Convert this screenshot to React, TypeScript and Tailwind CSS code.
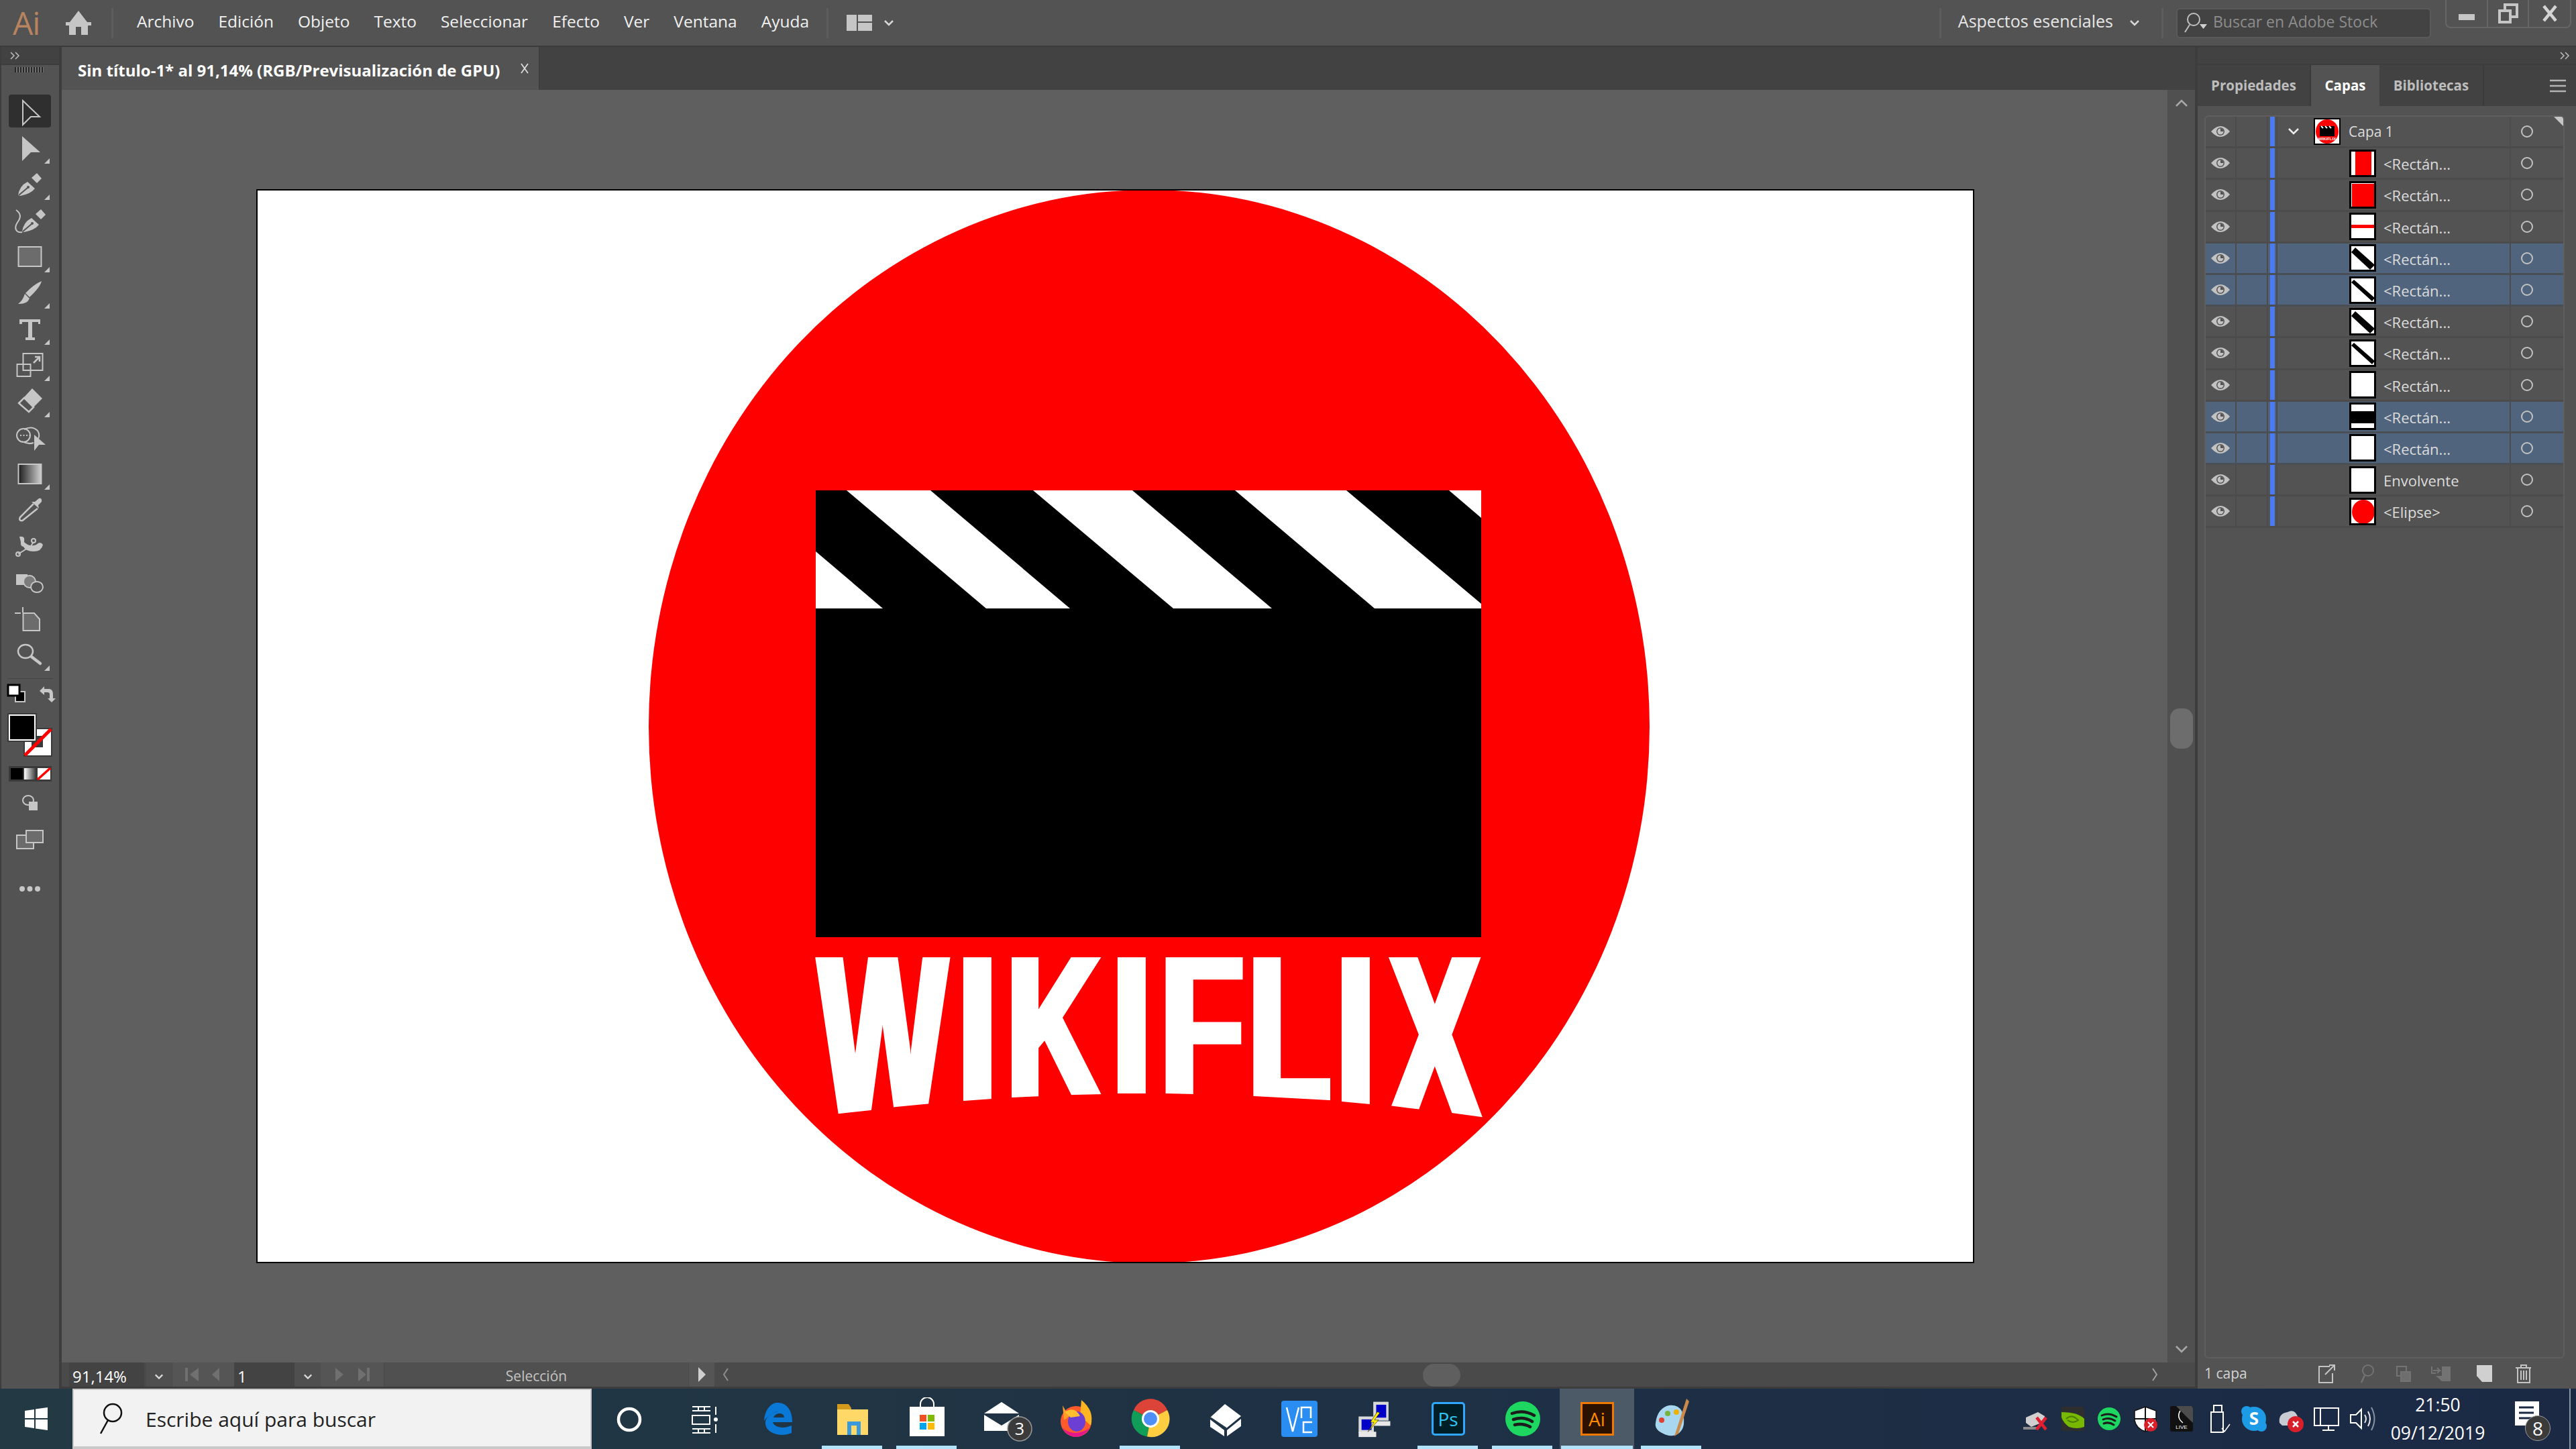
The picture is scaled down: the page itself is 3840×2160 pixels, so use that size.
import React from "react";

const G = "#c6c6c6";
const Tri = () => <path d="M66 50 L74 42 L74 50Z" fill={G} />;

const Tool = ({ children, tri }: { children: React.ReactNode; tri?: boolean }) => (
  <svg width="88" height="54" viewBox="0 0 88 54" className="block shrink-0">
    {children}
    {tri && <Tri />}
  </svg>
);

const PenNib = ({ dx = 0, dy = 0 }: { dx?: number; dy?: number }) => (
  <g transform={`translate(${dx} ${dy})`}>
    <path d="M27 43 Q29 29 41 23 L52 33 Q46 41 30 44 Z" fill={G} />
    <path d="M28 43 L41 32" stroke="#535353" strokeWidth="2" />
    <circle cx="42" cy="31" r="2" fill="#535353" />
    <path d="M47 17 L55 10 L62 18 L55 25 Z" fill={G} />
  </g>
);

const Tools = () => (
  <div className="flex flex-col">
    <Tool>
      <rect x="13" y="1" width="63" height="49" rx="4" fill="#2f2f2f" />
      <path d="M34 10 L59 34 L46 34 L34 46Z" fill="none" stroke={G} strokeWidth="2" />
    </Tool>
    <Tool tri>
      <path d="M33 9 L60 33 L46 33 L33 46Z" fill={G} />
    </Tool>
    <Tool tri>
      <PenNib />
    </Tool>
    <Tool>
      <PenNib dx={6} dy={0} />
      <path d="M24 11 Q34 18 27 28 Q20 38 26 43 Q29 45 33 44" fill="none" stroke={G} strokeWidth="2" />
    </Tool>
    <Tool tri>
      <rect x="27.5" y="12" width="34" height="29" fill="#6c6c6c" stroke={G} strokeWidth="2" />
    </Tool>
    <Tool tri>
      <path d="M62 9 Q60 18 44 33 L38 27 Q50 14 62 9Z" fill={G} />
      <path d="M37 28 L44 35 Q40 44 27 43 Q34 38 37 28Z" fill={G} />
    </Tool>
    <Tool tri>
      <path d="M29 12 H60 V19 H57 V16 H48 V39 H52 V43 H38 V39 H42 V16 H33 V19 H29Z" fill={G} />
    </Tool>
    <Tool tri>
      <rect x="34.5" y="9" width="29" height="25" fill="none" stroke={G} strokeWidth="2" />
      <rect x="25.5" y="25" width="20" height="18" fill="none" stroke={G} strokeWidth="2" />
      <path d="M50 23 L59 14 M52 14 H59 V21" fill="none" stroke={G} strokeWidth="2.5" />
    </Tool>
    <Tool tri>
      <path d="M48 7 L63 22 L50 35 L36 20Z" fill={G} />
      <path d="M36 21 L50 35 L43 42 L28 29Z" fill="none" stroke={G} strokeWidth="2.5" />
    </Tool>
    <Tool>
      <circle cx="35" cy="23" r="10" fill="none" stroke={G} strokeWidth="2" />
      <path d="M36 14 Q48 8 56 16 Q60 22 57 28 M33 32 Q42 37 50 34" fill="none" stroke={G} strokeWidth="2" />
      <path d="M30 23 H47" stroke={G} strokeWidth="2" strokeDasharray="2 2.5" />
      <path d="M51 22 L68 37 L58 37 L51 46Z" fill={G} />
    </Tool>
    <Tool tri>
      <defs>
        <linearGradient id="tg">
          <stop offset="0" stopColor="#1c1c1c" />
          <stop offset="1" stopColor="#d0d0d0" />
        </linearGradient>
      </defs>
      <rect x="27.5" y="12" width="34" height="29" fill="url(#tg)" stroke={G} strokeWidth="2" />
    </Tool>
    <Tool>
      <path d="M50 17 L30 37 Q28 41 31 42 Q33 43 36 40 L56 24" fill="none" stroke={G} strokeWidth="2.5" />
      <path d="M47 14 L52 14 L58 9 Q63 8 62 14 L57 19 L58 24 Z" fill={G} />
    </Tool>
    <Tool>
      <path d="M27 38 L46 26 M46 26 L50 20" stroke={G} strokeWidth="2" fill="none" />
      <circle cx="27" cy="38" r="3" fill="none" stroke={G} strokeWidth="2" />
      <circle cx="50" cy="18" r="3" fill="none" stroke={G} strokeWidth="2" />
      <path d="M29 12 Q38 10 36 20 Q44 28 54 24 Q60 18 64 24 Q62 34 50 34 Q38 34 35 27 Q30 26 31 20 Z" fill={G} />
    </Tool>
    <Tool>
      <rect x="24" y="14" width="17" height="16" fill={G} />
      <circle cx="44" cy="25" r="9" fill="#7c7c7c" stroke={G} strokeWidth="2" />
      <ellipse cx="55" cy="33" rx="9" ry="8" fill="#535353" stroke={G} strokeWidth="2" />
    </Tool>
    <Tool>
      <path d="M22 18 H31 M34 9 V17" stroke={G} strokeWidth="2" />
      <path d="M34.5 18 H51 L59 27 V44 H34.5Z" fill="#6c6c6c" stroke={G} strokeWidth="2" />
    </Tool>
    <Tool tri>
      <ellipse cx="38" cy="21" rx="11" ry="10" fill="none" stroke={G} strokeWidth="2.5" />
      <path d="M47 29 L60 39" stroke={G} strokeWidth="4.5" strokeLinecap="round" />
    </Tool>
  </div>
);

const ToolBottom = () => (
  <svg width="88" height="330" viewBox="0 1010 88 330" className="block shrink-0 mt-[7px]">
    <path d="M11 1010 H79" stroke="#454545" strokeWidth="2" />
    <rect x="23" y="1030" width="14" height="15" fill="#000" stroke="#c6c6c6" strokeWidth="2" />
    <rect x="12" y="1020" width="17" height="16" fill="#fff" stroke="#000" strokeWidth="3" />
    <path d="M59 1029 L66 1022 V1026 H74 Q79 1027 79 1034 V1040 H83 L77 1046 L71 1040 H74 V1034 Q74 1031 71 1031 H66 V1035Z" fill={G} />
    <rect x="35" y="1084" width="43" height="43" fill="#3a3a3a" />
    <rect x="37" y="1086" width="39" height="39" fill="#fff" />
    <rect x="47" y="1096" width="17" height="17" fill="#3a3a3a" />
    <rect x="52" y="1101" width="7" height="7" fill="#535353" />
    <path d="M37 1125 L76 1086" stroke="#f00" strokeWidth="5" />
    <rect x="11" y="1062" width="44" height="43" fill="#3a3a3a" />
    <rect x="13" y="1064" width="40" height="39" fill="#fff" />
    <rect x="15" y="1066" width="36" height="35" fill="#000" />
    <rect x="13" y="1141" width="64" height="23" fill="#3a3a3a" />
    <rect x="16" y="1144" width="18" height="17" fill="#000" />
    <defs>
      <linearGradient id="mg">
        <stop offset="0" stopColor="#fff" />
        <stop offset="1" stopColor="#333" />
      </linearGradient>
    </defs>
    <rect x="36" y="1144" width="18" height="17" fill="url(#mg)" />
    <rect x="56" y="1144" width="19" height="17" fill="#fff" />
    <path d="M56 1161 L75 1144" stroke="#f00" strokeWidth="3.5" />
    <ellipse cx="42" cy="1192" rx="8" ry="7" fill="none" stroke={G} strokeWidth="2" />
    <rect x="43" y="1194" width="13" height="13" fill={G} />
    <rect x="25" y="1244" width="25" height="20" fill="#6c6c6c" stroke={G} strokeWidth="2" />
    <rect x="39" y="1237" width="25" height="18" fill="#6c6c6c" stroke={G} strokeWidth="2" />
    <circle cx="33" cy="1324" r="4" fill={G} />
    <circle cx="44.5" cy="1324" r="4" fill={G} />
    <circle cx="56" cy="1324" r="4" fill={G} />
  </svg>
);

const LeftBar = () => (
  <div className="w-[92px] shrink-0 flex flex-col bg-[#535353] border-l-2 border-r-4 border-[#3d3d3d] box-border">
    <div className="h-[25px] bg-[#424242] flex items-center pl-[12px] border-b-2 border-[#3d3d3d] box-content">
      <svg width="16" height="14" viewBox="0 0 16 14">
        <path d="M2 2 L7 7 L2 12 M9 2 L14 7 L9 12" fill="none" stroke="#bdbdbd" strokeWidth="1.5" />
      </svg>
    </div>
    <div className="h-[43px] flex items-start pt-[3px] pl-[20px]">
      <div className="w-[43px] h-[8px] bg-[repeating-linear-gradient(90deg,#262626_0,#262626_2px,#707070_2px,#707070_4px)]" />
    </div>
    <div className="-ml-[2px]">
      <Tools />
      <ToolBottom />
    </div>
  </div>
);

const Sep = () => <div className="w-[3px] h-[45px] bg-[#5d5d5d] shrink-0" />;

const Chevron = ({ c = "#d8d8d8", w = 16 }: { c?: string; w?: number }) => (
  <svg width={w} height="10" viewBox="0 0 16 10" className="shrink-0">
    <path d="M2 2 L8 8 L14 2" fill="none" stroke={c} strokeWidth="2.5" />
  </svg>
);

const menu = ["Archivo", "Edición", "Objeto", "Texto", "Seleccionar", "Efecto", "Ver", "Ventana", "Ayuda"];

const TopBar = () => (
  <div className="h-[68px] bg-[#535353] flex items-center shrink-0 relative">
    <span className="ml-[19px] w-[44px] text-[48px] leading-none text-[#b8835f] font-normal tracking-[-1px]">Ai</span>
    <svg width="42" height="36" viewBox="0 0 42 36" className="ml-[33px] shrink-0">
      <path d="M21 0 L34 17 H40 V22 H35 V36 H25 V24 H17 V36 H7 V22 H2 V17 H8Z" fill="#c6c6c6" />
    </svg>
    <div className="ml-[28px]">
      <Sep />
    </div>
    <div className="ml-[35px] mb-[4px] flex gap-[36px] text-[24.5px] text-[#f0f0f0] whitespace-nowrap">
      {menu.map((m) => (
        <span key={m}>{m}</span>
      ))}
    </div>
    <div className="ml-[26px]">
      <Sep />
    </div>
    <svg width="38" height="24" viewBox="0 0 38 24" className="ml-[27px] shrink-0">
      <rect x="0" y="0" width="15" height="24" fill="#c6c6c6" />
      <rect x="17" y="0" width="21" height="10" fill="#c6c6c6" />
      <rect x="17" y="12" width="21" height="12" fill="#c6c6c6" />
    </svg>
    <div className="ml-[17px]">
      <Chevron />
    </div>
    <div className="flex-1" />
    <Sep />
    <span className="ml-[25px] mb-[4px] text-[25px] text-[#e6e6e6] whitespace-nowrap">Aspectos esenciales</span>
    <div className="ml-[24px]">
      <Chevron />
    </div>
    <div className="ml-[32px]">
      <Sep />
    </div>
    <div className="ml-[19px] w-[380px] h-[45px] bg-[#434343] border-2 border-[#5a5a5a] rounded-[6px] flex items-center pl-[9px] box-border">
      <svg width="36" height="32" viewBox="0 0 36 32" className="shrink-0">
        <circle cx="15" cy="11" r="9" fill="none" stroke="#c0c0c0" strokeWidth="2" />
        <path d="M9 19 L2 30" stroke="#c0c0c0" strokeWidth="2" />
        <path d="M24 18 H35 L29.5 25Z" fill="#d0d0d0" />
      </svg>
      <span className="ml-[8px] mb-[3px] text-[23px] text-[#8d8d8d] whitespace-nowrap">Buscar en Adobe Stock</span>
    </div>
    <div className="ml-[21px] mr-[7px] w-[188px] h-[42px] -mt-[26px] border-2 border-t-0 border-[#666666] rounded-b-[8px] flex box-border">
      <div className="w-[62px] flex items-end justify-center pb-[10px] border-r-2 border-[#666666]">
        <div className="w-[24px] h-[9px] bg-[#c6c6c6]" />
      </div>
      <div className="w-[61px] flex items-center justify-center border-r-2 border-[#666666]">
        <svg width="30" height="30" viewBox="0 0 30 30">
          <rect x="10" y="2" width="18" height="18" fill="none" stroke="#c6c6c6" strokeWidth="4" />
          <rect x="2" y="11" width="16" height="17" fill="#535353" stroke="#c6c6c6" strokeWidth="4" />
        </svg>
      </div>
      <div className="flex-1 flex items-center justify-center">
        <svg width="24" height="26" viewBox="0 0 24 26">
          <path d="M3 2 L21 24 M21 2 L3 24" stroke="#d4d4d4" strokeWidth="4.5" />
        </svg>
      </div>
    </div>
  </div>
);

const Artwork = () => {
  const letters: [string, number, number, number][] = [
    ["W", 1221, 2.01, 1668],
    ["I", 1428, 2.08, 1645],
    ["K", 1501, 1.95, 1640],
    ["I", 1658, 2.08, 1632],
    ["F", 1730, 2.03, 1632],
    ["L", 1861, 2.0, 1642],
    ["I", 1992, 2.08, 1650],
    ["X", 2070, 2.06, 1670],
  ];
  return (
    <svg width="2557" height="1597" viewBox="384 284 2557 1597" className="block">
      <defs>
        <filter id="fat" x="-5%" y="-5%" width="110%" height="110%">
          <feMorphology operator="dilate" radius="6 0" />
        </filter>
        <clipPath id="arc">
          <polygon points="1200,1427 2230,1427 2230,1668 2208,1665 2164,1659 2102,1652 2063,1647 2043,1646 2000,1642 1981,1640 1870,1634 1780,1631 1739,1630 1709,1630 1667,1630 1647,1631 1602,1632 1509,1636 1479,1638 1437,1641 1388,1645 1336,1650 1298,1655 1243,1661 1200,1668" />
        </clipPath>
      </defs>
      <rect x="384" y="284" width="2557" height="1597" fill="#fff" />
      <ellipse cx="1713" cy="1083" rx="746" ry="800" fill="#f00" />
      <rect x="1216" y="731" width="992" height="666" fill="#000" />
      <g fill="#fff">
        <polygon points="1216,822 1216,907 1316,907" />
        <polygon points="1262,731 1387,731 1595,907 1470,907" />
        <polygon points="1540,731 1688,731 1896,907 1749,907" />
        <polygon points="1841,731 2007,731 2208,900 2208,907 2049,907" />
        <polygon points="2160,731 2208,731 2208,772" />
      </g>
      <g clipPath="url(#arc)">
        <g filter="url(#fat)">
          {letters.map(([ch, x, sx, base], i) => (
            <text
              key={i}
              transform={`translate(${x} ${base}) scale(${sx} ${(base - 1427) / 68.8})`}
              fontSize="100"
              fontFamily="Liberation Sans"
              fontWeight="700"
              fill="#fff"
            >
              {ch}
            </text>
          ))}
        </g>
      </g>
    </svg>
  );
};

const StatusBar = () => (
  <div className="h-[36px] bg-[#4a4a4a] flex shrink-0 text-[#e8e8e8] overflow-hidden">
    <div className="w-[11px] shrink-0" />
    <div className="w-[112px] bg-[#434343] rounded-t-[4px] text-[24px] leading-[42px] pl-[5px] text-white">91,14%</div>
    <div className="w-[38px] ml-[3px] bg-[#4f4f4f] flex items-center justify-center pt-[6px]"><Chevron w={14} /></div>
    <div className="w-[92px] ml-[1px] bg-[#555555] flex items-center justify-center">
      <svg width="56" height="24" viewBox="0 0 56 24"><path d="M1 2 H5 V22 H1Z M21 2 V22 L8 12Z M52 2 V22 L41 12Z" fill="#707070" /></svg>
    </div>
    <div className="w-[90px] bg-[#434343] text-[24px] leading-[42px] pl-[5px] text-white">1</div>
    <div className="w-[39px] bg-[#4f4f4f] flex items-center justify-center pt-[6px]"><Chevron w={14} /></div>
    <div className="w-[94px] bg-[#555555] flex items-center justify-center">
      <svg width="54" height="24" viewBox="0 0 54 24"><path d="M2 2 L14 12 L2 22Z M36 2 L48 12 L36 22Z M49 2 H53 V22 H49Z" fill="#707070" /></svg>
    </div>
    <div className="w-[453px] ml-[1px] bg-[#505050] flex items-center justify-center text-[21px] text-[#c4c4c4] pt-[6px]">Selección</div>
    <div className="w-[38px] ml-[1px] bg-[#555555] flex items-center justify-center">
      <svg width="14" height="24" viewBox="0 0 14 24"><path d="M2 1 L13 12 L2 23Z" fill="#cfcfcf" /></svg>
    </div>
    <div className="w-[20px] ml-[12px] flex items-center">
      <svg width="10" height="22" viewBox="0 0 10 22"><path d="M8 2 L2 11 L8 20" fill="none" stroke="#8f8f8f" strokeWidth="2" /></svg>
    </div>
    <div className="w-[1024px] shrink-0" />
    <div className="w-[56px] h-[34px] mt-[2px] bg-[#5f5f5f] rounded-[20px] shrink-0" />
    <div className="w-[1030px] shrink-0" />
    <svg width="10" height="22" viewBox="0 0 10 22" className="mt-[7px] shrink-0"><path d="M2 2 L8 11 L2 20" fill="none" stroke="#a0a0a0" strokeWidth="2" /></svg>
  </div>
);

const Center = () => (
  <div className="flex-1 flex flex-col min-w-0">
    <div className="h-[64px] bg-[#424242] flex shrink-0 border-b-2 border-[#3b3b3b] box-content -mb-[2px]">
      <div className="w-[713px] h-[64px] bg-[#535353] relative flex items-center pl-[24px] pt-[6px] text-[24px] font-bold text-white whitespace-nowrap border-r-2 border-[#3f3f3f]">
        Sin título-1* al 91,14% (RGB/Previsualización de GPU)
        <svg width="16" height="16" viewBox="0 0 16 16" className="absolute left-[682px] top-[24px]">
          <path d="M3 1 L13 15 M13 1 L3 15" stroke="#dcdcdc" strokeWidth="1.8" />
        </svg>
      </div>
    </div>
    <div className="flex-1 flex bg-[#5f5f5f] min-h-0">
      <div className="flex-1 pl-[290px] pt-[148px]">
        <div className="w-[2561px] h-[1601px] border-2 border-black box-border">
          <Artwork />
        </div>
      </div>
      <div className="w-[41px] bg-[#505050] flex flex-col items-center justify-between py-[14px] shrink-0">
        <svg width="20" height="12" viewBox="0 0 20 12"><path d="M2 10 L10 2 L18 10" fill="none" stroke="#a8a8a8" strokeWidth="2.5" /></svg>
        <div className="w-[34px] h-[60px] mt-[6px] bg-[#6d6d6d] rounded-[14px]" />
        <svg width="20" height="12" viewBox="0 0 20 12"><path d="M2 2 L10 10 L18 2" fill="none" stroke="#a8a8a8" strokeWidth="2.5" /></svg>
      </div>
    </div>
    <StatusBar />
    <div className="h-[3px] bg-[#3d3d3d] shrink-0" />
  </div>
);

const Eye = () => (
  <svg width="28" height="16" viewBox="0 0 28 16">
    <path d="M0 8 Q14 -8 28 8 Q14 24 0 8Z" fill="#c2c2c2" />
    <circle cx="14" cy="8" r="6" fill="#535353" />
    <circle cx="14" cy="8" r="4.5" fill="#c2c2c2" />
    <path d="M14 3.5 A4.5 4.5 0 0 1 18.5 8 L14 8Z" fill="#535353" />
  </svg>
);

type ThumbKind = "sides" | "red" | "band" | "d1" | "d2" | "white" | "black" | "ellipse";

const ThumbArt = ({ kind }: { kind: ThumbKind }) => (
  <svg width="36" height="36" viewBox="0 0 36 36" className="block">
    <rect width="36" height="36" fill="#fff" />
    {kind === "sides" && <rect x="6" width="24" height="36" fill="#f00" />}
    {kind === "red" && <rect x="1" y="1" width="34" height="34" fill="#f00" />}
    {kind === "band" && <rect y="15" width="36" height="5" fill="#f00" />}
    {kind === "d1" && <path d="M0 9 L6 2 L35 28 L28 35Z" fill="#000" />}
    {kind === "d2" && <path d="M0 6 L4 2 L35 29 L31 34Z" fill="#000" />}
    {kind === "black" && <rect y="10" width="36" height="18" fill="#000" />}
    {kind === "ellipse" && <ellipse cx="18" cy="18" rx="17" ry="18" fill="#f00" />}
  </svg>
);

const rows: { name: string; kind: ThumbKind; sel?: boolean }[] = [
  { name: "<Rectán...", kind: "sides" },
  { name: "<Rectán...", kind: "red" },
  { name: "<Rectán...", kind: "band" },
  { name: "<Rectán...", kind: "d1", sel: true },
  { name: "<Rectán...", kind: "d2", sel: true },
  { name: "<Rectán...", kind: "d1" },
  { name: "<Rectán...", kind: "d2" },
  { name: "<Rectán...", kind: "white" },
  { name: "<Rectán...", kind: "black", sel: true },
  { name: "<Rectán...", kind: "white", sel: true },
  { name: "Envolvente", kind: "white" },
  { name: "<Elipse>", kind: "ellipse" },
];

const Ring = () => <div className="w-[18px] h-[18px] rounded-full border-2 border-[#c2c2c2]" />;

const LayerRow = ({ sel, children }: { sel?: boolean; children: React.ReactNode }) => (
  <div className={`h-[47.2px] flex shrink-0 border-b-[3px] box-border ${sel ? "bg-[#50657d] border-[#4a4f55]" : "border-[#4c4c4c]"}`}>
    <div className="w-[46px] flex items-center justify-center border-r-2 border-[#4c4c4c] shrink-0">
      <Eye />
    </div>
    <div className="w-[47px] border-r-2 border-[#4c4c4c] shrink-0" />
    <div className="w-[14px] flex justify-center border-r-2 border-[#4c4c4c] shrink-0">
      <div className="w-[7px] h-full bg-[#4b7bf0]" />
    </div>
    <div className="flex-1 flex items-center min-w-0">{children}</div>
    <div className="w-[80px] flex items-center justify-start pl-[15px] border-l-2 border-[#4c4c4c] shrink-0">
      <Ring />
    </div>
  </div>
);

const Panel = () => (
  <div className="w-[568px] shrink-0 flex flex-col bg-[#535353] border-l-4 border-[#3d3d3d] box-border">
    <div className="h-[25px] bg-[#424242] flex items-center justify-end pr-[9px] border-b-2 border-[#3d3d3d] box-content shrink-0">
      <svg width="16" height="14" viewBox="0 0 16 14">
        <path d="M2 2 L7 7 L2 12 M9 2 L14 7 L9 12" fill="none" stroke="#bdbdbd" strokeWidth="1.5" />
      </svg>
    </div>
    <div className="h-[61px] bg-[#424242] flex items-stretch shrink-0 text-[20.5px] font-bold text-[#bdbdbd]">
      <div className="w-[169px] flex items-center justify-center border-r-2 border-[#3a3a3a]">Propiedades</div>
      <div className="w-[102px] flex items-center justify-center bg-[#535353] text-white">Capas</div>
      <div className="w-[156px] flex items-center justify-center border-r-2 border-[#3a3a3a]">Bibliotecas</div>
      <div className="flex-1 flex items-center justify-end pr-[15px]">
        <svg width="24" height="20" viewBox="0 0 24 20"><path d="M0 2 H24 M0 10 H24 M0 18 H24" stroke="#b4b4b4" strokeWidth="2.5" /></svg>
      </div>
    </div>
    <div className="flex-1 min-h-0 ml-[10px] mt-[14px] mb-[1px] w-[537px] border-2 border-[#5e5e5e] rounded-[6px] flex flex-col box-border relative overflow-hidden">
      <div className="absolute right-0 top-0 w-0 h-0 border-t-[14px] border-l-[14px] border-t-[#c6c6c6] border-l-transparent" />
      <LayerRow>
        <svg width="20" height="12" viewBox="0 0 20 12" className="ml-[14px] shrink-0"><path d="M3 2 L10 9 L17 2" fill="none" stroke="#ececec" strokeWidth="2.5" /></svg>
        <div className="ml-[20px] w-[40px] h-[40px] border-2 border-black bg-white shrink-0 box-border">
          <svg width="36" height="36" viewBox="0 0 36 36" className="block">
            <ellipse cx="18" cy="18" rx="17" ry="18" fill="#f00" />
            <rect x="7" y="10" width="22" height="15" fill="#000" />
            <path d="M9 10 L12 13 M15 10 L18 13 M21 10 L24 13" stroke="#fff" strokeWidth="2" />
            <text x="18" y="31" textAnchor="middle" fontSize="6" fontWeight="700" fill="#fff" fontFamily="Liberation Sans">WIKIFLIX</text>
          </svg>
        </div>
        <span className="ml-[12px] pt-[2px] text-[21px] text-[#dcdcdc] whitespace-nowrap">Capa 1</span>
      </LayerRow>
      {rows.map((r, i) => (
        <LayerRow key={i} sel={r.sel}>
          <div className="ml-[107px] w-[40px] h-[41px] border-[3px] border-black shrink-0 box-border overflow-hidden">
            <ThumbArt kind={r.kind} />
          </div>
          <span className="ml-[11px] pt-[3px] text-[22px] text-[#dcdcdc] whitespace-nowrap">{r.name}</span>
        </LayerRow>
      ))}
    </div>
    <div className="h-[44px] flex items-center shrink-0 relative">
      <span className="ml-[10px] text-[21px] text-[#d4d4d4]">1 capa</span>
      <div className="ml-[103px] flex items-center">
        <svg width="320" height="30" viewBox="0 0 320 30">
          <path d="M20 4 H4 V28 H24 V14 M13 16 L27 2 M19 2 H27 V10" fill="none" stroke="#c4c4c4" strokeWidth="2" />
          <g transform="translate(-8 0)">
            <circle cx="85" cy="10" r="8" fill="none" stroke="#737373" strokeWidth="2" />
            <path d="M80 17 L75 28" stroke="#737373" strokeWidth="2.5" />
          </g>
          <g transform="translate(-14 0)">
            <rect x="134" y="4" width="14" height="14" fill="none" stroke="#737373" strokeWidth="2" />
            <rect x="140" y="12" width="14" height="14" fill="#6e6e6e" stroke="#737373" strokeWidth="2" />
          </g>
          <g transform="translate(-18 0)">
            <path d="M190 4 V14 H196 M192 10 H202 L198 6 M198 14 L202 10" fill="none" stroke="#737373" strokeWidth="2" />
            <path d="M205 4 H218 V26 H205 L196 18 H205Z" fill="#737373" />
          </g>
          <g transform="translate(-17 0)">
            <path d="M256 2 H279 V27 H264 L256 18Z" fill="#d0d0d0" />
          </g>
          <path d="M293 6 H317 M301 6 V2 H309 V6 M296 6 V28 H314 V6 M301 10 V24 M305 10 V24 M309 10 V24" transform="translate(4 0)" fill="none" stroke="#c4c4c4" strokeWidth="2" />
        </svg>
      </div>
    </div>
  </div>
);

const IconBox = ({ children }: { children: React.ReactNode }) => (
  <svg width="64" height="64" viewBox="0 0 64 64">{children}</svg>
);

const apps: { el: React.ReactNode; line?: boolean; active?: boolean }[] = [
  { el: <IconBox><ellipse cx="32" cy="33" rx="16" ry="16" fill="none" stroke="#fff" strokeWidth="4.5" /></IconBox> },
  {
    el: (
      <IconBox>
        <path d="M15 14 H42 M15 20 H42 M24 14 V20 M33 14 V20 M15 47 H42 M15 53 H42 M24 47 V53 M33 47 V53" stroke="#fff" strokeWidth="2" fill="none" />
        <rect x="15" y="27" width="26" height="13" fill="none" stroke="#fff" strokeWidth="2" />
        <path d="M50 14 V26 M50 40 V53" stroke="#fff" strokeWidth="2" />
        <circle cx="50" cy="33" r="3" fill="#fff" />
      </IconBox>
    ),
  },
  {
    el: (
      <IconBox>
        <path d="M29 8 C44 7 53 18 53 37 H24 C26 44 38 48 52 42 V53 C36 60 15 54 13 40 C12 30 20 24 32 21 C24 22 16 28 11 35 C12 20 19 10 29 8Z M25 30 H41 C41 22 28 22 25 30Z" fill="#0a78d7" fillRule="evenodd" />
      </IconBox>
    ),
  },
  {
    el: (
      <IconBox>
        <path d="M9 10 H26 L30 16 V50 H9Z" fill="#d39a1c" />
        <path d="M9 18 H55 V56 H9Z" fill="#ffd867" />
        <rect x="24" y="36" width="20" height="20" fill="#3a9bdc" />
        <rect x="30" y="42" width="8" height="14" fill="#ffd867" />
      </IconBox>
    ),
    line: true,
  },
  {
    el: (
      <IconBox>
        <path d="M22 16 V10 A10 10 0 0 1 42 10 V16" fill="none" stroke="#fff" strokeWidth="2" />
        <rect x="6" y="14" width="52" height="44" fill="#fff" />
        <rect x="21" y="26" width="10" height="10" fill="#f25022" />
        <rect x="33" y="26" width="10" height="10" fill="#7fba00" />
        <rect x="21" y="38" width="10" height="10" fill="#00a4ef" />
        <rect x="33" y="38" width="10" height="10" fill="#ffb900" />
      </IconBox>
    ),
    line: true,
  },
  {
    el: (
      <svg width="90" height="72" viewBox="0 0 90 72" className="ml-[18px]">
        <path d="M10 28 L36 11 L62 28Z" fill="#fff" />
        <path d="M10 30 L36 46 L62 30 V54 H10Z" fill="#fff" />
        <circle cx="63" cy="51" r="18" fill="#3b3b3b" stroke="#9a9a9a" strokeWidth="1.5" />
        <text x="63" y="60" textAnchor="middle" fontSize="25" fill="#fff" fontFamily="Open Sans">3</text>
      </svg>
    ),
  },
  {
    el: (
      <IconBox>
        <circle cx="32" cy="36" r="23" fill="#ff5a2b" />
        <path d="M32 59 A23 23 0 0 1 12 46 Q30 60 52 46 A23 23 0 0 1 32 59Z" fill="#e6178d" />
        <path d="M40 4 Q60 20 54 42 L38 28Z" fill="#ffb521" />
        <path d="M12 12 L20 26 L34 20 L14 34Z" fill="#ff9b26" />
        <ellipse cx="33" cy="36" rx="13" ry="15" fill="#6b3fd4" />
        <path d="M15 22 Q30 12 38 28 L24 30Z" fill="#ffbf2e" />
      </IconBox>
    ),
  },
  {
    el: (
      <IconBox>
        <path d="M32 32 L7 19 A27 27 0 0 1 57 19Z" fill="#db4437" />
        <path d="M7 19 A27 27 0 0 0 27 58.5 L32 32Z" fill="#0f9d58" />
        <path d="M57 19 A27 27 0 0 1 27 58.5 L32 32Z" fill="#ffcd40" />
        <circle cx="32" cy="32" r="13" fill="#fff" />
        <circle cx="32" cy="32" r="10" fill="#4d8ef7" />
      </IconBox>
    ),
    line: true,
  },
  {
    el: (
      <IconBox>
        <path d="M32 10 L56 28 L34 46 L10 30Z" fill="#fff" />
        <path d="M10 33 L31 49 V58 L10 44Z M35 49 L56 32 V43 L35 58Z" fill="#fff" />
        <path d="M10 30 L34 46" stroke="#233a44" strokeWidth="2" />
      </IconBox>
    ),
  },
  {
    el: (
      <svg width="54" height="54" viewBox="0 0 54 54">
        <rect width="54" height="54" rx="4" fill="#2a8df2" />
        <path d="M8 10 L17 46 L26 10" fill="none" stroke="#fff" strokeWidth="2.5" />
        <path d="M30 26 V10 H44 V26 M46 32 H33 V47 H46" fill="none" stroke="#fff" strokeWidth="2.5" />
      </svg>
    ),
  },
  {
    el: (
      <svg width="56" height="56" viewBox="0 0 64 64">
        <rect x="31" y="3" width="26" height="32" fill="#d8d8d8" />
        <rect x="36" y="8" width="17" height="22" fill="#0000c8" />
        <rect x="30" y="36" width="30" height="8" fill="#e8e8e8" />
        <rect x="6" y="28" width="26" height="28" fill="#d8d8d8" />
        <rect x="11" y="33" width="17" height="18" fill="#0000c8" />
        <rect x="6" y="54" width="30" height="9" fill="#e8e8e8" />
        <path d="M38 20 L26 38 H32 L22 54 L40 34 H33 L42 22Z" fill="#ffee00" stroke="#000" strokeWidth="0.6" />
      </svg>
    ),
  },
  {
    el: (
      <div className="w-[50px] h-[50px] bg-[#001e26] border-[3px] border-[#31a8ff] rounded-[5px] flex items-center justify-center text-[#31c5f4] text-[28px] leading-none box-border">
        Ps
      </div>
    ),
    line: true,
  },
  {
    el: (
      <IconBox>
        <circle cx="32" cy="32" r="26" fill="#1ed760" />
        <path d="M16 24 Q33 18 49 27 M18 33 Q33 28 46 36 M20 41 Q32 38 43 44" fill="none" stroke="#1c1c1c" strokeWidth="4.5" strokeLinecap="round" />
      </IconBox>
    ),
    line: true,
  },
  {
    el: (
      <div className="w-[50px] h-[50px] bg-[#2a1100] border-[3px] border-[#f07a00] flex items-center justify-center text-[#ff8a00] text-[28px] leading-none box-border">
        Ai
      </div>
    ),
    line: true,
    active: true,
  },
  {
    el: (
      <IconBox>
        <path d="M28 12 C44 10 52 22 50 40 C48 54 36 60 24 56 C16 53 6 48 8 38 C10 22 18 14 28 12Z" fill="#a8d7ef" />
        <circle cx="26" cy="24" r="4" fill="#78b43c" />
        <circle cx="39" cy="22" r="4" fill="#f0b000" />
        <circle cx="17" cy="34" r="4" fill="#e04030" />
        <path d="M54 2 L58 6 L42 54 L36 58Z" fill="#c98a4c" />
      </IconBox>
    ),
    line: true,
  },
];

const Tray = () => (
  <div className="flex items-center gap-[10px] mr-[5px] shrink-0">
    <svg width="44" height="44" viewBox="0 0 44 44">
      <path d="M6 20 L24 12 L34 18 V26 L14 34 L6 28Z" fill="#d0d0d0" />
      <path d="M2 34 H24 V38 H2Z" fill="#8a8a8a" />
      <path d="M22 20 L36 38 M36 20 L22 38" stroke="#e02030" strokeWidth="4.5" />
    </svg>
    <svg width="44" height="44" viewBox="0 0 44 44">
      <rect x="5" y="4" width="34" height="36" rx="2" fill="#2e2e2e" />
      <path d="M5 12 Q30 12 39 22 V34 Q28 38 16 34 Q8 28 5 20Z" fill="#76b900" />
      <path d="M12 22 Q20 14 30 24 Q22 30 14 24" fill="none" stroke="#4c7a00" strokeWidth="2" />
    </svg>
    <svg width="44" height="44" viewBox="0 0 44 44">
      <ellipse cx="22" cy="22" rx="17" ry="17" fill="#1ed760" />
      <path d="M11 17 Q22 12 33 19 M13 23 Q22 19 31 25 M14 29 Q22 26 29 31" fill="none" stroke="#1c1c1c" strokeWidth="3" strokeLinecap="round" />
    </svg>
    <svg width="44" height="44" viewBox="0 0 44 44">
      <path d="M22 4 L38 10 V24 Q36 36 22 41 Q8 36 6 24 V10Z" fill="#fff" stroke="#111" strokeWidth="1.5" />
      <path d="M22 4 V41 M6 22 H38" stroke="#111" strokeWidth="2" />
      <circle cx="30" cy="31" r="10" fill="#d9202a" />
      <path d="M26 27 L34 35 M34 27 L26 35" stroke="#fff" strokeWidth="2" />
    </svg>
    <svg width="44" height="44" viewBox="0 0 44 44">
      <rect x="5" y="3" width="34" height="38" rx="3" fill="#111" />
      <path d="M14 3 H36 Q39 3 39 8 V28 Q28 18 14 3Z" fill="#888" opacity="0.5" />
      <path d="M20 10 Q14 20 24 28" fill="none" stroke="#fff" strokeWidth="1.5" />
      <text x="22" y="37" textAnchor="middle" fontSize="8" fill="#fff" fontFamily="Liberation Sans">LIVE</text>
    </svg>
    <svg width="44" height="44" viewBox="0 0 44 44">
      <path d="M16 2 H28 V12 H30 V42 H12 V12 H16Z" fill="none" stroke="#fff" strokeWidth="2" />
      <path d="M12 12 H30" stroke="#fff" strokeWidth="2" />
      <path d="M28 36 L32 41 L40 30" fill="none" stroke="#fff" strokeWidth="1.5" />
    </svg>
    <svg width="44" height="44" viewBox="0 0 44 44">
      <circle cx="22" cy="22" r="18" fill="#1e9be6" />
      <circle cx="11" cy="11" r="8" fill="#1e9be6" />
      <circle cx="33" cy="33" r="8" fill="#1e9be6" />
      <text x="22" y="31" textAnchor="middle" fontSize="26" fontWeight="700" fill="#fff" fontFamily="Open Sans">S</text>
    </svg>
    <svg width="44" height="44" viewBox="0 0 44 44">
      <path d="M6 28 Q4 14 18 12 Q30 6 34 22 L24 32 H10Z" fill="#c8ccd2" />
      <circle cx="30" cy="30" r="12" fill="#d9202a" />
      <path d="M26 26 L34 34 M34 26 L26 34" stroke="#fff" strokeWidth="2.5" />
    </svg>
    <svg width="44" height="44" viewBox="0 0 44 44">
      <rect x="10" y="6" width="30" height="26" fill="none" stroke="#fff" strokeWidth="2" />
      <rect x="4" y="6" width="9" height="26" fill="#1a2a44" stroke="#fff" strokeWidth="2" />
      <path d="M25 32 V38 M16 39 H34" stroke="#fff" strokeWidth="2" />
    </svg>
    <svg width="44" height="44" viewBox="0 0 44 44">
      <path d="M4 16 H12 L20 8 V36 L12 28 H4Z" fill="none" stroke="#fff" strokeWidth="2" />
      <path d="M25 16 Q29 22 25 28 M30 11 Q36 22 30 33" fill="none" stroke="#e8e8e8" strokeWidth="2" />
      <path d="M35 5 Q44 22 35 39" fill="none" stroke="#8892a0" strokeWidth="2" />
    </svg>
  </div>
);

const TaskBar = () => (
  <div className="h-[90px] shrink-0 flex bg-linear-to-r from-[#233a44] to-[#1b2945] relative">
    <div className="w-[108px] flex items-center justify-center shrink-0">
      <svg width="34" height="34" viewBox="0 0 34 34">
        <path d="M0 5 L14 3 V16 H0Z M16 2.5 L34 0 V16 H16Z M0 18 H14 V31 L0 29Z M16 18 H34 V34 L16 31.5Z" fill="#fff" />
      </svg>
    </div>
    <div className="w-[774px] bg-[#f2f2f2] border-2 border-b-4 border-[#c8c8c8] flex items-center shrink-0 box-border">
      <svg width="50" height="50" viewBox="0 0 50 50" className="ml-[27px] shrink-0">
        <circle cx="31" cy="17" r="13" fill="none" stroke="#111" strokeWidth="2.5" />
        <path d="M24 28 L13 48" stroke="#111" strokeWidth="2.5" />
      </svg>
      <span className="ml-[30px] pt-[3px] text-[30px] text-[#222222] whitespace-nowrap">Escribe aquí para buscar</span>
    </div>
    <div className="flex shrink-0">
      {apps.map((a, i) => (
        <div key={i} className={`w-[111px] h-[90px] relative flex items-center justify-center ${a.active ? "bg-[#4b5a66]" : ""}`}>
          {a.el}
          {a.line && <div className={`absolute bottom-0 h-[5px] bg-[#b3e2fb] ${a.active ? "left-[2px] right-[2px]" : "left-[10px] right-[11px]"}`} />}
        </div>
      ))}
    </div>
    <div className="flex-1 flex items-center justify-end relative">
      <Tray />
      <div className="w-[170px] flex flex-col items-center text-white text-[26.5px] leading-[42px] shrink-0">
        <span>21:50</span>
        <span>09/12/2019</span>
      </div>
      <div className="w-[85px] ml-[11px] flex items-center justify-center relative shrink-0 h-[90px]">
        <svg width="60" height="64" viewBox="0 0 60 64">
          <rect x="6" y="6" width="36" height="36" fill="#fff" />
          <path d="M12 15 H34 M12 23 H34 M12 31 H34" stroke="#1b2945" strokeWidth="3" />
        </svg>
        <div className="absolute left-[34px] top-[40px] w-[38px] h-[38px] rounded-full bg-[#3b3b3b] border border-[#9a9a9a] flex items-center justify-center text-white text-[28px] leading-none">
          8
        </div>
      </div>
      <div className="w-[15px] shrink-0" />
      <div className="w-[2px] h-[90px] bg-[#8a94a4] shrink-0" />
      <div className="w-[8px] shrink-0" />
    </div>
  </div>
);

export default function App() {
  return (
    <div className="w-[3840px] h-[2160px] flex flex-col overflow-hidden bg-[#535353] [font-family:'Open_Sans',sans-serif]">
      <TopBar />
      <div className="h-[2px] bg-[#3b3b3b] shrink-0" />
      <div className="h-[2000px] flex shrink-0 min-h-0">
        <LeftBar />
        <Center />
        <Panel />
      </div>
      <TaskBar />
    </div>
  );
}
